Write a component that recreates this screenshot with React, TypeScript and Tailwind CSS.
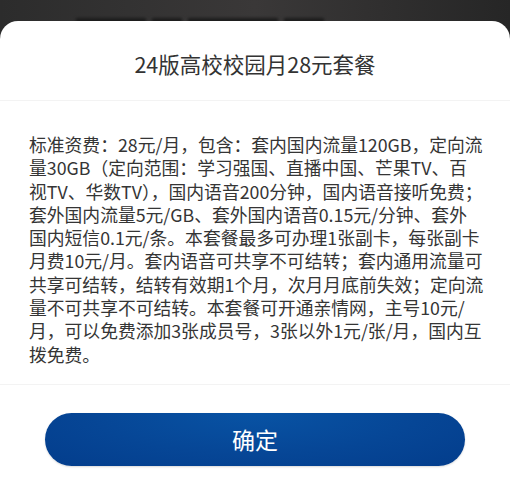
const lines = [
  '标准资费：28元/月，包含：套内国内流量120GB，定向流',
  '量30GB（定向范围：学习强国、直播中国、芒果TV、百',
  '视TV、华数TV），国内语音200分钟，国内语音接听免费；',
  '套外国内流量5元/GB、套外国内语音0.15元/分钟、套外',
  '国内短信0.1元/条。本套餐最多可办理1张副卡，每张副卡',
  '月费10元/月。套内语音可共享不可结转；套内通用流量可',
  '共享可结转，结转有效期1个月，次月月底前失效；定向流',
  '量不可共享不可结转。本套餐可开通亲情网，主号10元/',
  '月，可以免费添加3张成员号，3张以外1元/张/月，国内互',
  '拨免费。',
];

export default function App() {
  return (
    <div
      className="w-[510px] h-[500px] overflow-hidden flex flex-col bg-gradient-to-r from-[#2c2c2c] via-[#3a3838] to-[#262626]"
      style={{ fontFamily: '"Noto Sans CJK SC", "Noto Sans", sans-serif' }}
    >
      {/* blurred page behind the sheet */}
      <div className="h-[21px] shrink-0 overflow-hidden flex items-end gap-[6px] pl-[76px]">
        <div className="w-[70px] h-[5px] bg-[#1c1c1c] blur-[1.5px] translate-y-[2px]" />
        <div className="w-[30px] h-[5px] bg-[#1c1c1c] blur-[1.5px] translate-y-[2px]" />
        <div className="w-[90px] h-[5px] bg-[#1c1c1c] blur-[1.5px] translate-y-[2px]" />
        <div className="w-[40px] h-[5px] bg-[#1c1c1c] blur-[1.5px] translate-y-[2px]" />
      </div>

      <div className="flex-1 bg-white rounded-t-[18px] flex flex-col">
        <div className="h-[80px] pt-[7px] flex items-center justify-center text-[21.5px] text-[#333] border-b border-[#f3f3f3]">
          24版高校校园月28元套餐
        </div>

        <div className="pt-[32px] pb-[18px] px-[29px] text-[17.8px] leading-[23.3px] text-[#353535] whitespace-nowrap border-b border-[#f3f3f3]">
          {lines.map((l, i) => (
            <div key={i}>{l}</div>
          ))}
        </div>

        <div className="px-[45px] pt-[28px]">
          <button className="w-full h-[53px] rounded-full text-white text-[23px] bg-[radial-gradient(ellipse_at_50%_0%,#0853a4_0%,#064696_55%,#033d8c_100%)] shadow-[0_1px_2px_rgba(0,0,0,0.15)]">
            确定
          </button>
        </div>
      </div>
    </div>
  );
}
